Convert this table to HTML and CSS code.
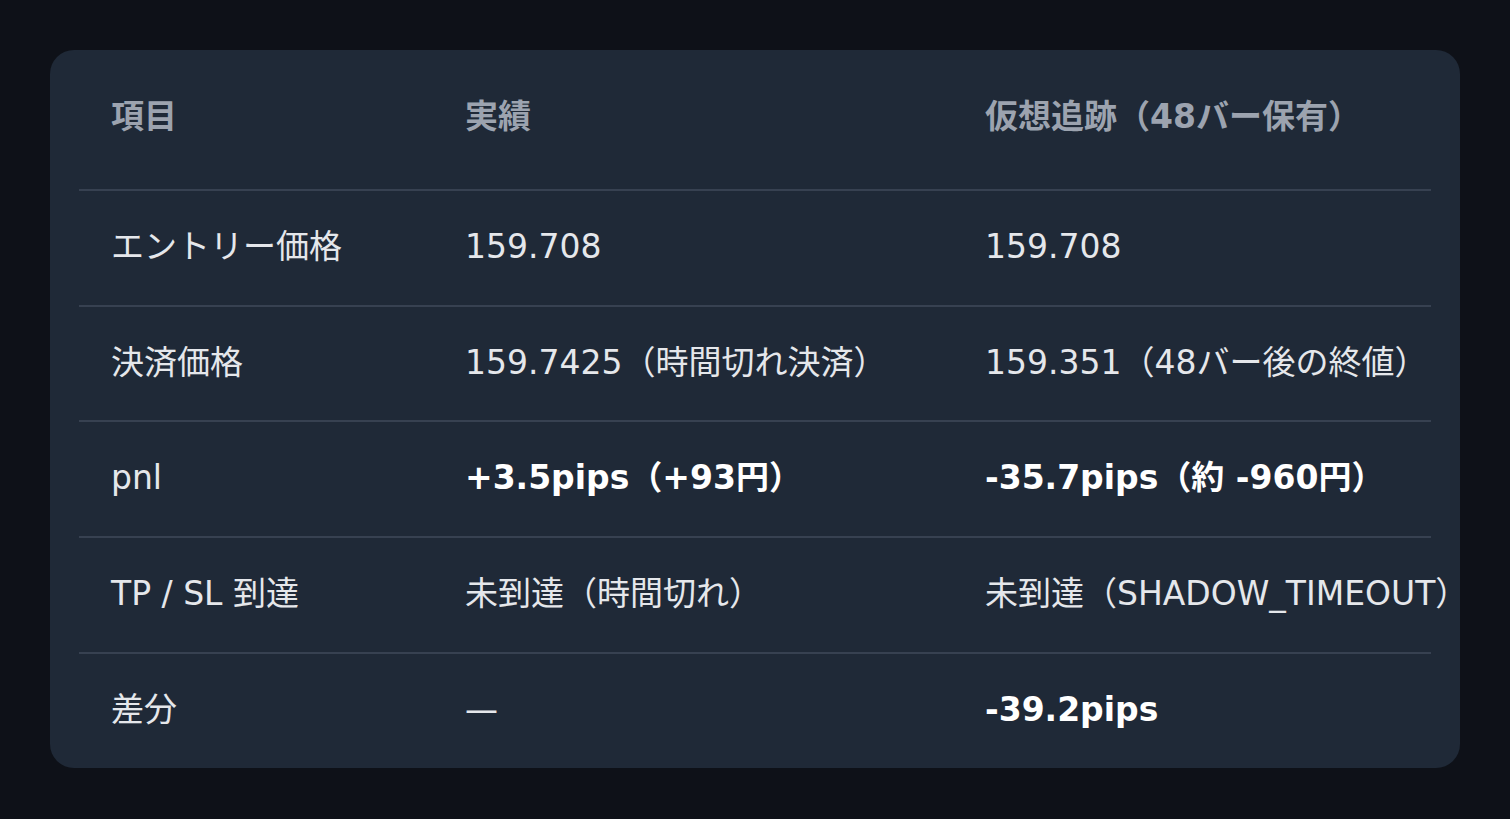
FILE: index.html
```html
<!DOCTYPE html>
<html lang="ja">
<head>
  <meta charset="UTF-8">
  <meta name="viewport" content="width=device-width, initial-scale=1.0">
  <title>実績と仮想追跡の比較</title>
  <link rel="stylesheet" href="styles.css">
</head>
<body>
  <div class="card">
    <table class="compare">
      <colgroup>
        <col class="col-label">
        <col class="col-actual">
        <col class="col-shadow">
      </colgroup>
      <thead>
        <tr>
          <th>項目</th>
          <th>実績</th>
          <th>仮想追跡（48バー保有）</th>
        </tr>
      </thead>
      <tbody>
        <tr>
          <td>エントリー価格</td>
          <td>159.708</td>
          <td>159.708</td>
        </tr>
        <tr>
          <td>決済価格</td>
          <td>159.7425（時間切れ決済）</td>
          <td>159.351（48バー後の終値）</td>
        </tr>
        <tr>
          <td>pnl</td>
          <td class="strong">+3.5pips（+93円）</td>
          <td class="strong">-35.7pips（約 -960円）</td>
        </tr>
        <tr>
          <td>TP / SL 到達</td>
          <td>未到達（時間切れ）</td>
          <td>未到達（SHADOW_TIMEOUT）</td>
        </tr>
        <tr>
          <td>差分</td>
          <td>—</td>
          <td class="strong">-39.2pips</td>
        </tr>
      </tbody>
    </table>
  </div>
</body>
</html>
```

FILE: styles.css
```css
:root {
  --bg-color: #0e1118;
  --card-bg: #1f2937;
  --border-color: #374151;
  --head-color: #9ca3af;
  --text-color: #e5e7eb;
  --strong-color: #ffffff;
}

body {
  margin: 0;
  padding: 50px;
  background-color: var(--bg-color);
  color: var(--text-color);
  font-family: "DejaVu Sans", "Noto Sans CJK JP", sans-serif;
}

.card {
  background: var(--card-bg);
  border-radius: 24px;
  padding: 0 29px;
}

.compare {
  width: 100%;
  border-collapse: collapse;
  table-layout: fixed;
  font-size: 33px;
}

.col-label { width: 354px; }
.col-actual { width: 520px; }

.compare th,
.compare td {
  text-align: left;
  white-space: nowrap;
  padding: 0 32px;
}

.compare th {
  height: 140px;
  padding-bottom: 6px;
  box-sizing: border-box;
  color: var(--head-color);
  font-weight: 700;
  line-height: 44px;
}

.compare td {
  padding-top: 34px;
  padding-bottom: 36px;
  line-height: 43.7px;
  border-top: 2px solid var(--border-color);
}

.compare td.strong {
  color: var(--strong-color);
  font-weight: 700;
}
```
